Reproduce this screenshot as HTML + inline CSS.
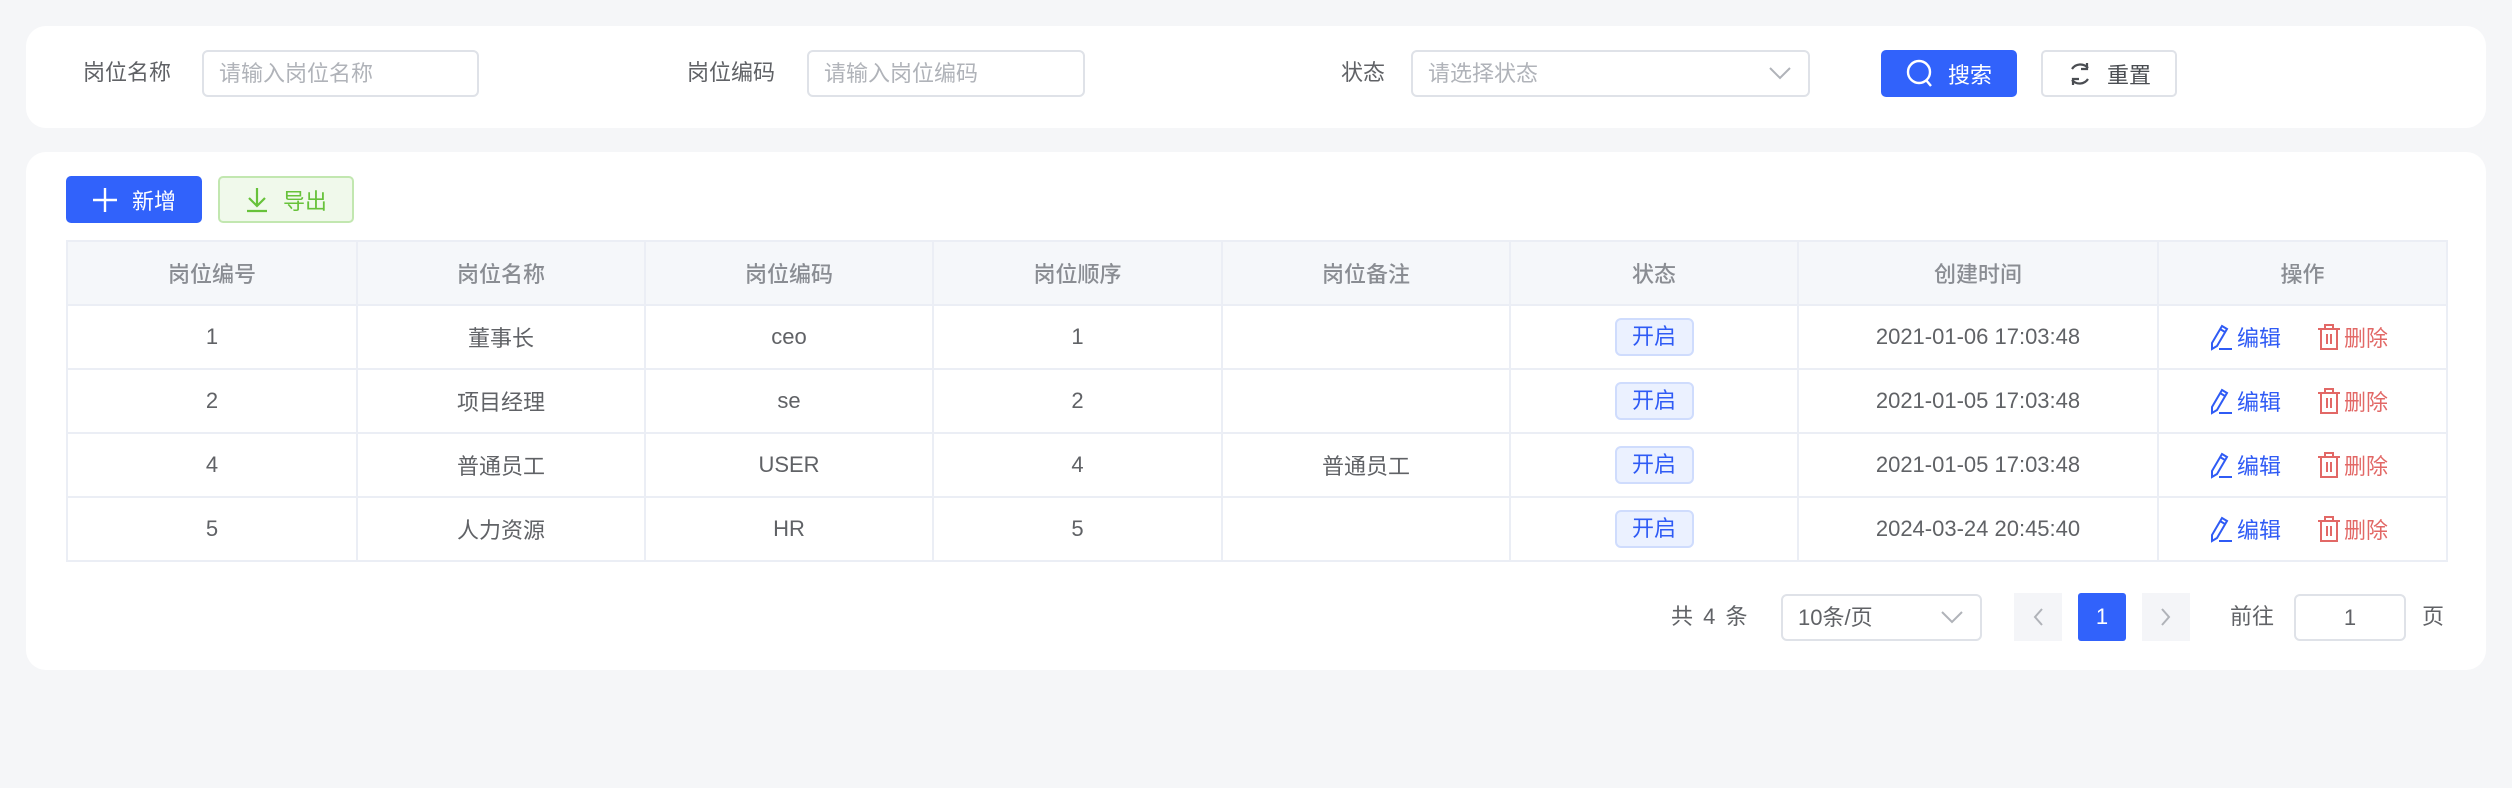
<!DOCTYPE html>
<html><head><meta charset="utf-8"><style>
*{margin:0;padding:0;box-sizing:border-box}
body{width:2512px;height:788px;background:#f5f6f8;font-family:"Liberation Sans","Noto Sans CJK SC",sans-serif;position:relative;overflow:hidden;color:#606266}
.a{position:absolute}
.card{position:absolute;background:#fff;border-radius:20px;left:26px;width:2460px}
.lbl{position:absolute;font-size:22px;color:#606266;line-height:30px}
.inp{position:absolute;border:2px solid #dfe2e8;border-radius:6px;height:47px;font-size:22px;color:#b0b3b9;line-height:43px;padding-left:15px;background:#fff}
.btn{position:absolute;border-radius:5px;font-size:22px;display:flex;align-items:center;justify-content:center;gap:14px}
table{position:absolute;left:66px;top:240px;border-collapse:collapse;width:2380px;font-size:22px;table-layout:fixed}
td,th{border:2px solid #ebeef5;text-align:center;height:64px;color:#606266;font-weight:normal}
th{background:#f5f7fa;color:#8a8d93;font-weight:500}
.tag{display:inline-block;width:79px;height:38px;line-height:34px;border:2px solid #cfdcfd;background:#ebf1ff;color:#2f5bf5;border-radius:6px;font-size:22px}
.ops{text-align:left;padding-left:48px}
.ed{color:#2f5bf5;display:inline-flex;align-items:center;gap:4px;vertical-align:middle}
.de{color:#e26866;display:inline-flex;align-items:center;gap:3px;margin-left:36px;vertical-align:middle}
</style></head><body>
<div class="card" style="top:26px;height:102px"></div>
<div class="lbl" style="left:83px;top:58px">岗位名称</div>
<div class="inp" style="left:202px;top:50px;width:277px">请输入岗位名称</div>
<div class="lbl" style="left:687px;top:58px">岗位编码</div>
<div class="inp" style="left:807px;top:50px;width:278px">请输入岗位编码</div>
<div class="lbl" style="left:1341px;top:58px">状态</div>
<div class="inp" style="left:1411px;top:50px;width:399px">请选择状态
<svg class="a" style="right:16px;top:14px" width="24" height="14" viewBox="0 0 24 14"><path d="M2 2l10 10 10-10" fill="none" stroke="#b0b3b9" stroke-width="2"/></svg></div>
<div class="btn" style="left:1881px;top:50px;width:136px;height:47px;background:#3162fb;color:#fff">
<svg width="28" height="30" viewBox="0 0 28 30"><circle cx="13" cy="13" r="11" fill="none" stroke="#fff" stroke-width="2.4"/><path d="M20 21l5 6" stroke="#fff" stroke-width="2.4"/></svg>搜索</div>
<div class="btn" style="left:2041px;top:50px;width:136px;height:47px;border:2px solid #dfe2e8;color:#4a4d52">
<svg width="26" height="28" viewBox="0 0 26 28"><path d="M5 9A10 10 0 0 1 21 8M21 19A10 10 0 0 1 5 20" fill="none" stroke="#4a4d52" stroke-width="2.2"/><path d="M20 3v6h-6M6 25v-6h6" fill="none" stroke="#4a4d52" stroke-width="2.2"/></svg>重置</div>

<div class="card" style="top:152px;height:518px"></div>
<div class="btn" style="left:66px;top:176px;width:136px;height:47px;background:#3162fb;color:#fff">
<svg width="26" height="26" viewBox="0 0 26 26"><path d="M13 1v24M1 13h24" stroke="#fff" stroke-width="2.4"/></svg>新增</div>
<div class="btn" style="left:218px;top:176px;width:136px;height:47px;background:#f0f9eb;border:2px solid #c2e7b0;color:#67c23a">
<svg width="24" height="26" viewBox="0 0 24 26"><path d="M12 1v18M4 11l8 8 8-8M2 24h20" fill="none" stroke="#67c23a" stroke-width="2.2"/></svg>导出</div>

<table>
<colgroup><col style="width:290px"><col style="width:288px"><col style="width:288px"><col style="width:289px"><col style="width:288px"><col style="width:288px"><col style="width:360px"><col style="width:289px"></colgroup>
<tr><th>岗位编号</th><th>岗位名称</th><th>岗位编码</th><th>岗位顺序</th><th>岗位备注</th><th>状态</th><th>创建时间</th><th>操作</th></tr>
<tr><td>1</td><td>董事长</td><td>ceo</td><td>1</td><td></td><td><span class="tag">开启</span></td><td>2021-01-06 17:03:48</td><td class="ops"><span class="ed"><svg width="26" height="28" viewBox="0 0 26 28"><path d="M15 3l5 3-10 17-5 3 0-6z M13 6l5 3" fill="none" stroke="#2f5bf5" stroke-width="2"/><path d="M12 26h13" stroke="#2f5bf5" stroke-width="2"/></svg>编辑</span><span class="de"><svg width="24" height="28" viewBox="0 0 24 28"><path d="M1 6h22M8 6V2h8v4M4 6v20h16V6M10 11v10M14 11v10" fill="none" stroke="#e26866" stroke-width="2"/></svg>删除</span></td></tr>
<tr><td>2</td><td>项目经理</td><td>se</td><td>2</td><td></td><td><span class="tag">开启</span></td><td>2021-01-05 17:03:48</td><td class="ops"><span class="ed"><svg width="26" height="28" viewBox="0 0 26 28"><path d="M15 3l5 3-10 17-5 3 0-6z M13 6l5 3" fill="none" stroke="#2f5bf5" stroke-width="2"/><path d="M12 26h13" stroke="#2f5bf5" stroke-width="2"/></svg>编辑</span><span class="de"><svg width="24" height="28" viewBox="0 0 24 28"><path d="M1 6h22M8 6V2h8v4M4 6v20h16V6M10 11v10M14 11v10" fill="none" stroke="#e26866" stroke-width="2"/></svg>删除</span></td></tr>
<tr><td>4</td><td>普通员工</td><td>USER</td><td>4</td><td>普通员工</td><td><span class="tag">开启</span></td><td>2021-01-05 17:03:48</td><td class="ops"><span class="ed"><svg width="26" height="28" viewBox="0 0 26 28"><path d="M15 3l5 3-10 17-5 3 0-6z M13 6l5 3" fill="none" stroke="#2f5bf5" stroke-width="2"/><path d="M12 26h13" stroke="#2f5bf5" stroke-width="2"/></svg>编辑</span><span class="de"><svg width="24" height="28" viewBox="0 0 24 28"><path d="M1 6h22M8 6V2h8v4M4 6v20h16V6M10 11v10M14 11v10" fill="none" stroke="#e26866" stroke-width="2"/></svg>删除</span></td></tr>
<tr><td>5</td><td>人力资源</td><td>HR</td><td>5</td><td></td><td><span class="tag">开启</span></td><td>2024-03-24 20:45:40</td><td class="ops"><span class="ed"><svg width="26" height="28" viewBox="0 0 26 28"><path d="M15 3l5 3-10 17-5 3 0-6z M13 6l5 3" fill="none" stroke="#2f5bf5" stroke-width="2"/><path d="M12 26h13" stroke="#2f5bf5" stroke-width="2"/></svg>编辑</span><span class="de"><svg width="24" height="28" viewBox="0 0 24 28"><path d="M1 6h22M8 6V2h8v4M4 6v20h16V6M10 11v10M14 11v10" fill="none" stroke="#e26866" stroke-width="2"/></svg>删除</span></td></tr>
</table>

<div class="lbl" style="left:1671px;top:602px;word-spacing:4px">共 4 条</div>
<div class="inp" style="left:1781px;top:594px;width:201px;color:#606266">10条/页
<svg class="a" style="right:16px;top:14px" width="24" height="14" viewBox="0 0 24 14"><path d="M2 2l10 10 10-10" fill="none" stroke="#b0b3b9" stroke-width="2"/></svg></div>
<div class="a" style="left:2014px;top:593px;width:48px;height:48px;background:#f4f5f8"><svg style="margin:14px 18px" width="12" height="20" viewBox="0 0 12 20"><path d="M10 2L3 10l7 8" fill="none" stroke="#b0b3b9" stroke-width="2"/></svg></div>
<div class="a" style="left:2078px;top:593px;width:48px;height:48px;background:#3162fb;color:#fff;font-size:22px;text-align:center;line-height:48px;border-radius:3px">1</div>
<div class="a" style="left:2142px;top:593px;width:48px;height:48px;background:#f4f5f8"><svg style="margin:14px 18px" width="12" height="20" viewBox="0 0 12 20"><path d="M2 2l7 8-7 8" fill="none" stroke="#b0b3b9" stroke-width="2"/></svg></div>
<div class="lbl" style="left:2230px;top:602px">前往</div>
<div class="inp" style="left:2294px;top:594px;width:112px;color:#606266;text-align:center;padding:0">1</div>
<div class="lbl" style="left:2422px;top:602px">页</div>
</body></html>
